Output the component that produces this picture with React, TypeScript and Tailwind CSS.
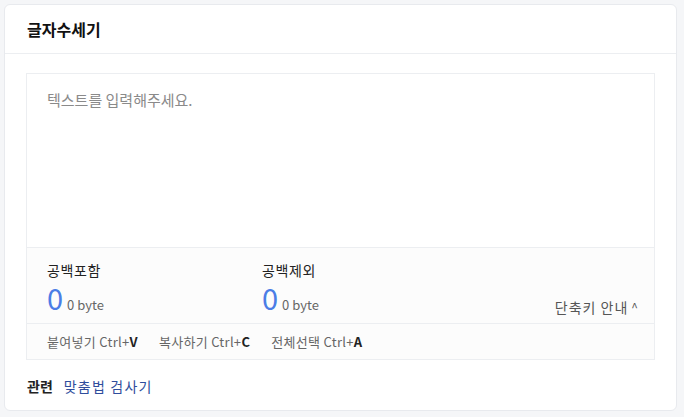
export default function App() {
  return (
    <div
      className="min-h-[417px] w-full bg-[#f5f6f8] p-1 pr-[7px]"
      style={{ fontFamily: '"Noto Sans CJK KR", "Noto Sans", sans-serif' }}
    >
      <div className="flex h-[407px] flex-col rounded-md border border-[#e8eaee] bg-white">
        <div className="flex h-[49px] items-center border-b border-[#eceef1] px-[22px]">
          <h1 className="text-[16px] font-bold text-[#111]">글자수세기</h1>
        </div>

        <div className="px-[21px] pt-[19px]">
          <div className="border border-[#eceef1]">
            <div className="h-[173px] px-5 pt-[15px] text-[15px] text-[#8a8a8a]">
              텍스트를 입력해주세요.
            </div>
            <div className="flex h-[76px] items-start border-t border-[#eceef1] bg-[#fcfcfc] px-5 pt-[12px]">
              <div className="w-[215px]">
                <div className="text-[14px] leading-[20px] tracking-[0.6px] text-[#222]">공백포함</div>
                <div className="mt-[2px] flex items-baseline gap-[4px] leading-[30px]">
                  <span className="text-[29px] text-[#4b7de6]">0</span>
                  <span className="text-[13px] text-[#666]">0 byte</span>
                </div>
              </div>
              <div>
                <div className="text-[14px] leading-[20px] tracking-[0.6px] text-[#222]">공백제외</div>
                <div className="mt-[2px] flex items-baseline gap-[4px] leading-[30px]">
                  <span className="text-[29px] text-[#4b7de6]">0</span>
                  <span className="text-[13px] text-[#666]">0 byte</span>
                </div>
              </div>
              <div className="ml-auto mr-[-5px] mt-[37px] flex items-center gap-[3px] text-[14px] leading-[20px] tracking-[1px] text-[#555]">
                단축키 안내<span className="text-[12px]">^</span>
              </div>
            </div>
            <div className="border-t border-[#eceef1] bg-[#fcfcfc] px-5">
              <div className="flex h-[35px] items-center gap-[21px] text-[13px] tracking-[0.3px] text-[#666]">
                <span>
                  붙여넣기 Ctrl+<b className="text-[#222]">V</b>
                </span>
                <span>
                  복사하기 Ctrl+<b className="text-[#222]">C</b>
                </span>
                <span>
                  전체선택 Ctrl+<b className="text-[#222]">A</b>
                </span>
              </div>
            </div>
          </div>
        </div>

        <div className="flex items-center gap-[11px] px-[22px] pt-[16px] text-[14px]">
          <span className="font-bold text-[#222]">관련</span>
          <a className="tracking-[1.2px] text-[#2f4d9c]">맞춤법 검사기</a>
        </div>
      </div>
    </div>
  );
}
